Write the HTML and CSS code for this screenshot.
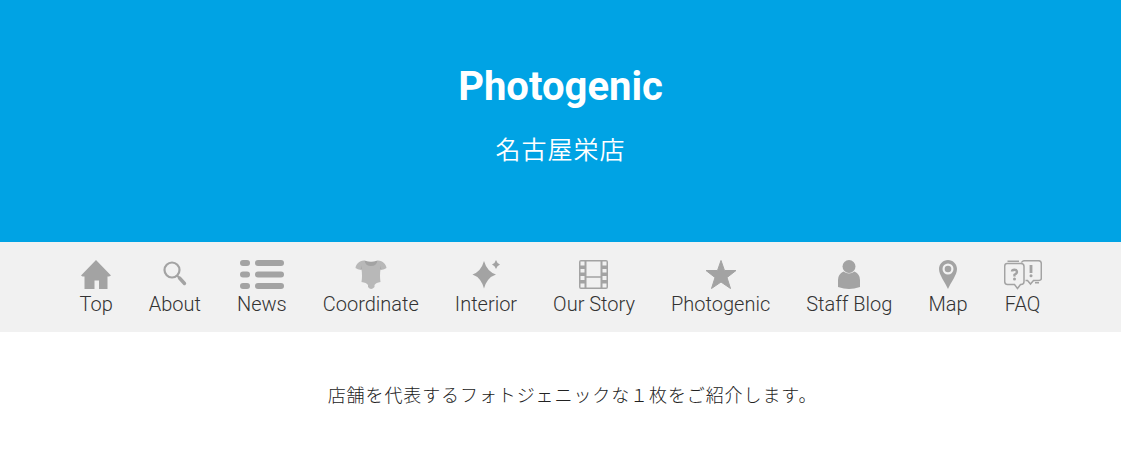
FILE: index.html
```html
<!DOCTYPE html>
<html lang="ja">

<head>
    <meta charset="UTF-8" />
    <meta name="viewport" content="width=device-width, initial-scale=1.0" />
    <title>Photogenic | 名古屋栄店</title>
    <link rel="stylesheet" href="styles.css">
</head>

<body>

<header class="hero">
    <h1 class="hero__title">Photogenic</h1>
    <p class="hero__shop">名古屋栄店</p>
</header>

<nav class="shop-nav">
    <ul class="shop-nav__list">
        <li>
            <a href="#top">
                <svg width="30" height="30" viewBox="0 0 30 30"><path d="M15 0L30 15.5L28 16.500H26.500V29H18V20.500H13.500V29H3.500V16.500H1.500L0 15.500Z"/></svg>
                <span>Top</span>
            </a>
        </li>
        <li>
            <a href="#about">
                <svg width="24" height="30" viewBox="0 0 24 30"><circle class="line" cx="9" cy="10" r="7.500" stroke-width="2.200"/><path class="line" d="M14 15.500L16 17.500" stroke-width="2"/><path class="line" d="M16.500 18L21.500 23.500" stroke-width="3.400" stroke-linecap="round"/></svg>
                <span>About</span>
            </a>
        </li>
        <li>
            <a href="#news">
                <svg width="44" height="30" viewBox="0 0 44 30"><rect x="0" y="0" width="10" height="6" rx="3"/><rect x="15" y="0" width="29" height="6" rx="3"/><rect x="0" y="11.500" width="10" height="6" rx="3"/><rect x="15" y="11.500" width="29" height="6" rx="3"/><rect x="0" y="23" width="10" height="6" rx="3"/><rect x="15" y="23" width="29" height="6" rx="3"/></svg>
                <span>News</span>
            </a>
        </li>
        <li>
            <a href="#coordinate">
                <svg width="32" height="30" viewBox="0 0 32 30"><path class="light" d="M9 0.500Q16 4 23 0.500C28 1 31 4 31.500 8Q28 10.500 25.500 9.500Q24.500 15 25.500 22Q21 22.500 19.500 25V27Q16 31 13 27V25Q11.500 22.500 6.500 22Q7.500 15 6.500 9.500Q4 10.500 0.500 8C1 4 4 1 9 0.500Z"/><path d="M9.500 0.500Q16 3 22.500 0.500Q21.500 6 16 6Q10.500 6 9.500 0.500ZM25.500 9.500L25 5.500L26.500 9.500ZM6.500 9.500L7 5.500L5.500 9.500Z"/></svg>
                <span>Coordinate</span>
            </a>
        </li>
        <li>
            <a href="#interior">
                <svg width="28" height="30" viewBox="0 0 28 30"><path d="M12 1Q15 11.500 24 14.500Q15 17.500 12 28.500Q9 17.500 0.500 14.500Q9 11.500 12 1ZM24 0Q25 3.500 28 4.500Q25 5.500 24 9Q23 5.500 20 4.500Q23 3.500 24 0Z"/></svg>
                <span>Interior</span>
            </a>
        </li>
        <li>
            <a href="#story">
                <svg width="30" height="30" viewBox="0 0 30 30"><path fill-rule="evenodd" d="M2 0H27Q29 0 29 2V27Q29 29 27 29H2Q0 29 0 27V2Q0 0 2 0ZM7.500 1.500V16.300H21.500V1.500ZM7.500 17.800V27.500H21.500V17.800ZM1.500 1.500V5.500H5.500V1.500ZM1.500 9V12.500H5.500V9ZM1.500 16V20H5.500V16ZM1.500 23.500V27.500H5.500V23.500ZM23.500 1.500V5.500H27.500V1.500ZM23.500 9V12.500H27.500V9ZM23.500 16V20H27.500V16ZM23.500 23.500V27.500H27.500V23.500Z"/></svg>
                <span>Our Story</span>
            </a>
        </li>
        <li>
            <a href="#photogenic">
                <svg width="32" height="30" viewBox="0 0 32 30"><path d="M16 0.500L19.500 10.500H31L22 17.500L25.500 28.500L16 22L6.500 28.500L10 17.500L1 10.500H12.500Z" stroke="#a3a3a3" stroke-width="1" stroke-linejoin="round"/></svg>
                <span>Photogenic</span>
            </a>
        </li>
        <li>
            <a href="#blog">
                <svg width="22" height="30" viewBox="0 0 22 30"><circle cx="11" cy="6.500" r="6.500"/><path d="M5.500 11.500Q11 15.500 16.500 11.500Q22 14 22 20V27Q16 29 11 29Q6 29 0 27V20Q0 14 5.500 11.500Z"/></svg>
                <span>Staff Blog</span>
            </a>
        </li>
        <li>
            <a href="#map">
                <svg width="18" height="30" viewBox="0 0 18 30"><path fill-rule="evenodd" d="M9 0C14 0 18 4 18 9C18 15 12 22 9 29C6 22 0 15 0 9C0 4 4 0 9 0ZM9 3.500A5.500 5.500 0 1 0 9 14.500A5.500 5.500 0 1 0 9 3.500Z"/><circle cx="9" cy="9" r="3.300"/></svg>
                <span>Map</span>
            </a>
        </li>
        <li>
            <a href="#faq">
                <svg width="38" height="30" viewBox="0 0 38 30"><g class="line" stroke-width="1.500"><path d="M3 3.600H17Q20 3.600 20 6.500V21.500Q20 24.500 17 24.500H16.500L13.500 28.500L10.500 24.500H3.500Q0.700 24.500 0.700 21.500V6.500Q0.700 3.600 3 3.600ZM3.500 1.300H15M17.500 2.500Q18.500 0.700 20.500 0.700H34.500Q37.300 0.700 37.300 3.500V18.500Q37.300 20.500 34.500 20.500H29.500L26.500 24L23.500 20.500H21.500M31 22.800H35"/><path d="M8 11.500Q8 9.700 10.500 9.700Q13 9.700 13 12Q13 13.500 10.500 14.800V16.500" stroke-width="2.400"/><path d="M27 5V13" stroke-width="2.800"/></g><circle cx="10.500" cy="19" r="1.500"/><circle cx="27" cy="15.800" r="1.500"/></svg>
                <span>FAQ</span>
            </a>
        </li>
    </ul>
</nav>

<main class="intro">
    <p>店舗を代表するフォトジェニックな１枚をご紹介します。</p>
</main>

</body>
</html>
```
FILE: styles.css
```css
*,
*::before,
*::after {
    box-sizing: border-box;
}

body,
h1,
p,
ul {
    margin: 0;
    padding: 0;
}

body {
    font-family: Roboto, "Noto Sans CJK JP", sans-serif;
    color: #222;
    background: #fff;
}

.hero {
    padding: 57px 20px 73px;
    text-align: center;
    color: #fff;
    background: #00a3e4;
}
.hero__title {
    font-size: 40px;
    font-weight: 700;
    line-height: 60px;
}
.hero__shop {
    margin-top: 16px;
    font-size: 25px;
    font-weight: 350;
    line-height: 36px;
    letter-spacing: 1px;
}

.shop-nav {
    padding: 18px 20px 14px;
    background: #f1f1f1;
}
.shop-nav__list {
    display: flex;
    flex-wrap: wrap;
    justify-content: center;
    gap: 16px 36px;
    list-style: none;
}
.shop-nav a {
    display: flex;
    flex-direction: column;
    align-items: center;
    font-size: 20px;
    font-weight: 300;
    line-height: 28px;
    color: #333;
    text-decoration: none;
}
.shop-nav svg {
    display: block;
    fill: #a3a3a3;
}
.shop-nav .line {
    fill: none;
    stroke: #a3a3a3;
}
.shop-nav .light {
    fill: #b8b8b8;
}

.intro {
    padding: 48px 20px;
    text-align: center;
}
.intro p {
    font-size: 18px;
    font-weight: 300;
    line-height: 32px;
    letter-spacing: 0.05em;
    text-indent: 24px;
}
```
